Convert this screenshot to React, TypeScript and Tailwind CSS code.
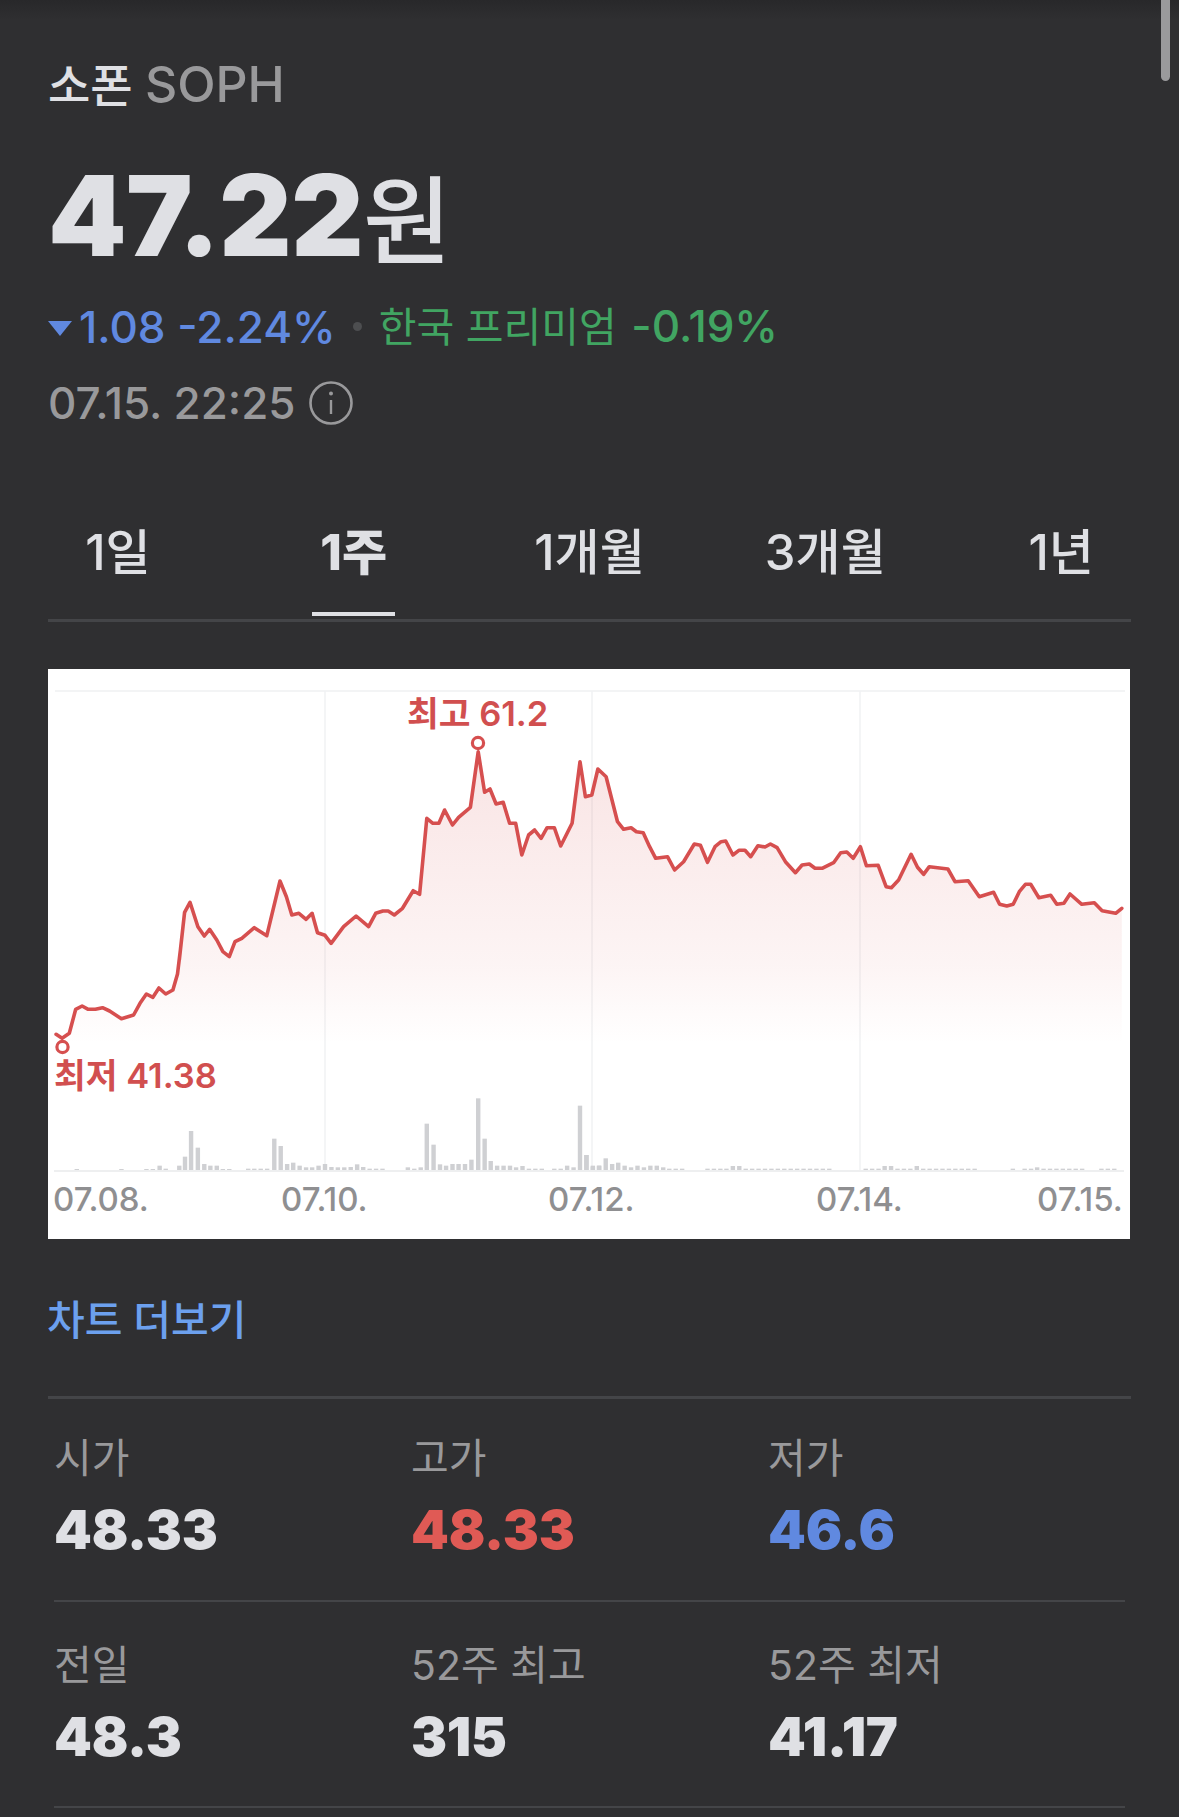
const FONT = "Inter, 'Noto Sans CJK KR', sans-serif";

// traced from the reference, [x, y] in page pixels after the zone mapping below
const lineLeft = [[45,-447],[62,-435],[82,-450],[100,-522],[118,-532],[135,-522],[155,-522],[175,-527],[195,-517],[228,-494],[262,-505],[280,-540],[298,-568],[316,-558],[333,-586],[352,-568],[372,-580],[385,-628],[393,-700]];
const lineMid = [[390,900],[405,757],[420,727],[442,800],[460,828],[475,808],[495,840],[512,875],[530,890],[546,845],[565,835],[600,803],[635,827],[672,663],[690,710],[705,765],[725,760],[745,778],[762,760],[777,818],[798,826],[815,850],[850,800],[885,768],[920,800],[940,760],[960,753],[975,753],[992,765],[1015,745],[1045,692],[1063,703],[1083,475],[1100,490],[1117,490],[1133,450],[1155,495],[1172,472],[1205,442],[1227,275],[1245,397],[1260,387],[1277,432],[1297,427],[1315,490],[1332,490],[1349,585],[1368,525],[1385,510],[1403,535],[1420,503],[1440,503],[1458,558],[1490,490],[1512,305]];
const lineRight = [[15,410],[33,405],[50,327],[73,350],[105,485],[122,508],[143,503],[158,515],[177,518],[195,560],[212,595],[245,590],[265,630],[290,605],[320,552],[337,556],[357,607],[378,560],[395,545],[408,543],[428,585],[445,571],[462,571],[478,590],[498,557],[518,561],[533,552],[552,563],[575,605],[603,638],[622,615],[642,612],[658,625],[678,625],[710,608],[730,578],[747,576],[765,595],[785,560],[802,617],[835,616],[857,680],[872,683],[892,660],[927,583],[945,622],[962,643],[978,620],[1030,627],[1050,665],[1087,662],[1118,710],[1158,697],[1175,733],[1195,738],[1213,733],[1230,695],[1247,673],[1262,673],[1285,713],[1318,706],[1335,733],[1355,730],[1372,702],[1405,733],[1440,728],[1462,752],[1500,760],[1517,745]];

const chartX = (x: number) => x - 48;
const chartY = (y: number) => y - 669;

const points = [
  ...lineLeft.map(([x, y]) => [40 + x / 2.8, 660 + (y + 700 + 870) / 3]),
  ...lineMid.map(([x, y]) => [40 + x / 2.8, 660 + y / 3]),
  ...lineRight.map(([x, y]) => [580 + x / 2.8, 660 + y / 3]),
].map(([x, y]) => [chartX(x), chartY(y)]);

const linePath = points.map(([x, y], i) => `${i ? "L" : "M"}${x.toFixed(1)} ${y.toFixed(1)}`).join(" ");
const last = points[points.length - 1];
const areaPath = `${linePath} L${last[0].toFixed(1)} 400 L${points[0][0].toFixed(1)} 400 Z`;

const barsLeft = [[103,657],[228,657],[298,657],[316,657],[335,647],[352,656],[390,647],[406,620],[423,543],[442,593],[460,642],[477,647],[495,647],[512,657],[530,657],[583,656],[600,656],[618,656],[636,656],[656,566],[674,588],[692,642],[709,638],[727,647],[745,652],[762,652],[780,647],[798,642],[816,651],[834,652],[852,652],[870,651],[888,643],[905,651],[923,656],[941,656],[959,656],[1030,652],[1048,656],[1066,652],[1083,521],[1102,584],[1120,643],[1137,647],[1155,642],[1172,642],[1190,642],[1208,629],[1227,445],[1245,566],[1262,633],[1280,647],[1298,647],[1316,647],[1333,652],[1351,648],[1369,656],[1387,656],[1405,656],[1440,656],[1458,656],[1476,647],[1494,652],[1512,467],[1530,615],[1548,647],[1565,647]];
const barsRight = [[18,615],[36,650],[54,647],[72,625],[90,642],[107,638],[125,647],[143,652],[161,647],[179,652],[197,647],[215,647],[233,652],[250,656],[268,656],[286,656],[357,656],[375,656],[393,656],[410,656],[428,648],[446,648],[464,656],[482,656],[500,656],[518,656],[536,656],[554,656],[572,656],[590,656],[608,656],[626,656],[644,656],[662,656],[680,656],[698,656],[800,656],[818,656],[836,656],[853,648],[871,648],[889,656],[907,656],[925,656],[943,648],[961,656],[979,656],[997,656],[1015,656],[1033,656],[1051,656],[1069,656],[1087,656],[1105,656],[1212,656],[1245,656],[1263,656],[1280,652],[1298,656],[1316,656],[1334,656],[1352,656],[1370,656],[1388,656],[1406,656],[1460,656],[1478,656],[1496,656]];

const bars = [
  ...barsLeft.map(([x, y]) => [40 + x / 2.8, 950 + y / 3]),
  ...barsRight.map(([x, y]) => [580 + x / 2.8, 950 + y / 3]),
];

const tabs = ["1일", "1주", "1개월", "3개월", "1년"];

const stats = [
  [
    { label: "시가", value: "48.33", color: "text-[#dfe0e4]" },
    { label: "고가", value: "48.33", color: "text-[#e05a55]" },
    { label: "저가", value: "46.6", color: "text-[#6089e0]" },
  ],
  [
    { label: "전일", value: "48.3", color: "text-[#dfe0e4]" },
    { label: "52주 최고", value: "315", color: "text-[#dfe0e4]" },
    { label: "52주 최저", value: "41.17", color: "text-[#dfe0e4]" },
  ],
];

function Chart() {
  return (
    <svg viewBox="0 0 1082 570" className="block h-[570px] w-[1082px] bg-white">
      <defs>
        <linearGradient id="area" gradientUnits="userSpaceOnUse" x1="0" y1="60" x2="0" y2="375">
          <stop offset="0" stopColor="#d64c4c" stopOpacity="0.16" />
          <stop offset="0.75" stopColor="#d64c4c" stopOpacity="0.06" />
          <stop offset="1" stopColor="#d64c4c" stopOpacity="0" />
        </linearGradient>
      </defs>
      <path d="M7 22H1077" stroke="#f3f4f5" strokeWidth="2" />
      {[277, 544, 812].map((x) => (
        <path key={x} d={`M${x} 22V502`} stroke="#f1f2f3" strokeWidth="1.5" />
      ))}
      <path d={areaPath} fill="url(#area)" />
      {bars.map(([x, y], i) => (
        <rect key={i} x={chartX(x) - 2.2} y={chartY(y)} width="4.4" height={1170.5 - y} fill="#cfd0d3" />
      ))}
      <path d="M6 502H1076" stroke="#eeeff0" strokeWidth="2" />
      <path d={linePath} fill="none" stroke="#d64f4f" strokeWidth="3.6" strokeLinejoin="round" strokeLinecap="round" />
      <circle cx="430" cy="74" r="5.6" fill="#fff" stroke="#d64f4f" strokeWidth="3.2" />
      <circle cx="14.5" cy="378" r="5.6" fill="#fff" stroke="#d64f4f" strokeWidth="3.2" />
      <g fontFamily={FONT} fontSize="34.5" fontWeight="600" fill="#d14f4f">
        <text x="359" y="57">최고 61.2</text>
        <text x="6" y="419">최저 41.38</text>
      </g>
      <g fontFamily={FONT} fontSize="33" fontWeight="500" fill="#8f8f91">
        <text x="5" y="542">07.08.</text>
        <text x="233" y="542">07.10.</text>
        <text x="500" y="542">07.12.</text>
        <text x="768" y="542">07.14.</text>
        <text x="989" y="542">07.15.</text>
      </g>
    </svg>
  );
}

export default function App() {
  return (
    <div className="relative h-[1817px] overflow-hidden bg-[#2f2f31] px-[48px] pt-[54px] font-[Inter,'Noto_Sans_CJK_KR',sans-serif]">
      <div className="absolute inset-x-0 top-0 h-[20px] bg-gradient-to-b from-[#28282a] to-[#2f2f31]" />
      <div className="absolute right-[9px] top-0 h-[81px] w-[9px] rounded-b-full bg-[#9a9a9c]" />

      <div className="relative text-[46px] font-medium leading-[60px]">
        <span className="text-[#dfe0e4]">소폰</span> <span className="text-[50px] text-[#99999b]">SOPH</span>
      </div>

      <div className="mt-[40px] flex h-[120px] items-baseline leading-[120px] text-[#dfe0e4]">
        <span className="text-[112px] font-black tracking-[-0.005em]">47.22</span>
        <span className="text-[96px] font-medium">원</span>
      </div>

      <div className="mt-[26px] flex items-center text-[44px] font-medium leading-[50px]">
        <svg viewBox="0 0 24 15" className="mr-[7px] mt-[4px] h-[15px] w-[24px]">
          <path d="M0 0H24L12 15Z" fill="#6089e0" />
        </svg>
        <span className="text-[#6089e0]">1.08 -2.24%</span>
        <span className="mx-[17px] h-[9px] w-[9px] rounded-full bg-[#4d4e50]" />
        <span className="text-[#41a562]">
          <span className="mr-[3px] text-[41px] font-normal">한국 프리미엄</span> -0.19%
        </span>
      </div>

      <div className="mt-[26px] flex items-center text-[44px] font-medium leading-[50px] text-[#99999b]">
        <span>07.15. 22:25</span>
        <svg viewBox="0 0 44 44" className="ml-[13px] h-[44px] w-[44px]" fill="none">
          <circle cx="22" cy="22" r="20.5" stroke="#99999b" strokeWidth="2.6" />
          <circle cx="22" cy="12.5" r="2" fill="#99999b" />
          <path d="M22 19V33" stroke="#99999b" strokeWidth="2.4" />
        </svg>
      </div>

      <div className="mt-[94px] h-[100px] border-b-[3px] border-[#444548]">
        <div className="-mx-[48px] grid grid-cols-5">
          {tabs.map((t, i) => (
            <div key={t} className="flex justify-center">
              <div
                className={`h-[94px] px-[8px] pt-[1px] text-[49px] leading-[60px] text-[#dfe0e4] ${
                  i === 1 ? "border-b-[4px] border-[#dfe0e4] font-extrabold" : "font-medium"
                }`}
              >
                {t}
              </div>
            </div>
          ))}
        </div>
      </div>

      <div className="mt-[47px]">
        <Chart />
      </div>

      <div className="-ml-[1px] mt-[56px] text-[41px] font-medium leading-[50px] text-[#6ca0ee]">차트 더보기</div>

      <div className="mt-[51px] border-t-[3px] border-[#444548]">
        {stats.map((row, i) => (
          <div
            key={i}
            className={`mx-[6px] grid grid-cols-[357px_357px_1fr] border-b-[2px] border-[#444548] ${
              i === 0 ? "pb-[40px] pt-[34px]" : "pb-[39px] pt-[38px]"
            }`}
          >
            {row.map((s) => (
              <div key={s.label}>
                <div className="text-[41px] leading-[50px] text-[#99999b]">{s.label}</div>
                <div className={`mt-[17px] text-[54px] font-black leading-[60px] tracking-[-0.005em] ${s.color}`}>
                  {s.value}
                </div>
              </div>
            ))}
          </div>
        ))}
      </div>
    </div>
  );
}
